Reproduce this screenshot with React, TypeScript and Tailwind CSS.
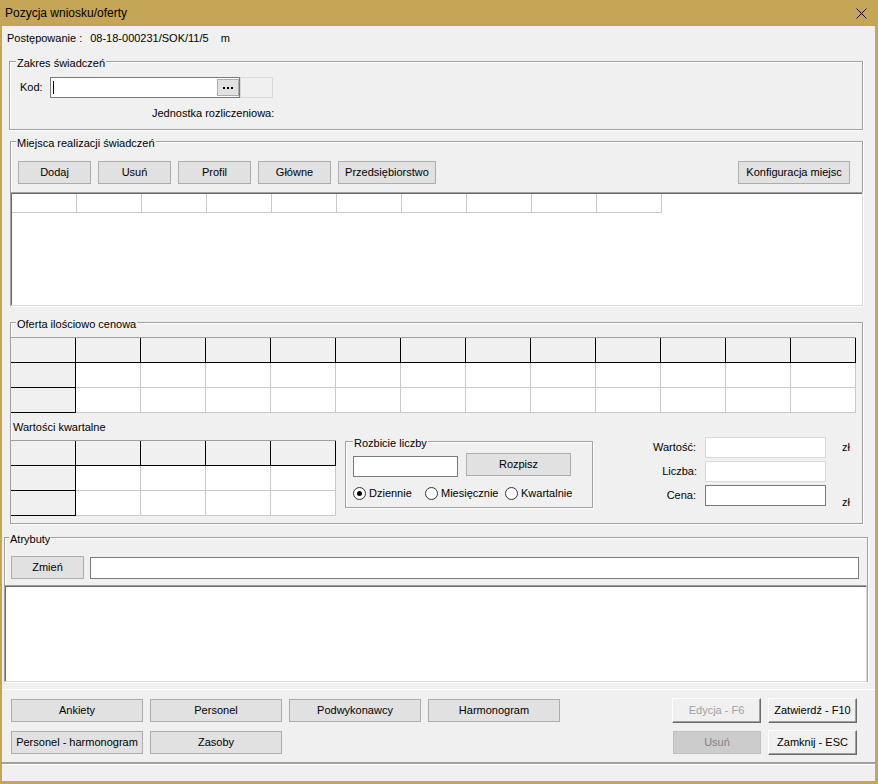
import clsx from "clsx";
import type { ReactNode } from "react";

const font = "font-['Liberation_Sans',Arial,sans-serif]";

function Group({
  label,
  className,
  labelClassName = "left-[6px]",
  children,
}: {
  label: string;
  className?: string;
  labelClassName?: string;
  children?: ReactNode;
}) {
  return (
    <div
      className={clsx(
        "relative border border-[#a0a0a0] shadow-[inset_1px_1px_0_#fff,1px_1px_0_#fff]",
        className,
      )}
    >
      <span
        className={clsx(
          "absolute -top-[6px] z-10 bg-[#f0f0f0] px-[1px] leading-[14px]",
          labelClassName,
        )}
      >
        {label}
      </span>
      {children}
    </div>
  );
}

function Btn({ children, className }: { children?: ReactNode; className?: string }) {
  return (
    <button
      type="button"
      className={clsx(
        "flex shrink-0 items-center justify-center border border-[#adadad] bg-[#e1e1e1] leading-none text-black",
        className,
      )}
    >
      {children}
    </button>
  );
}

function Btn3D({
  children,
  className,
  disabled,
}: {
  children?: ReactNode;
  className?: string;
  disabled?: boolean;
}) {
  return (
    <button
      type="button"
      className={clsx(
        "flex shrink-0 items-center justify-center border border-t-white border-r-[#696969] border-b-[#696969] border-l-white bg-[#f0f0f0] leading-none shadow-[inset_-1px_-1px_0_#a0a0a0]",
        disabled ? "text-[#a0a0a0]" : "text-black",
        className,
      )}
    >
      {children}
    </button>
  );
}

function DataGrid({ cols, rows }: { cols: number; rows: number }) {
  return (
    <div className="w-fit border-t border-l border-[#a0a0a0] bg-white">
      {Array.from({ length: rows }).map((_, r) => (
        <div key={r} className="flex">
          {Array.from({ length: cols }).map((_, c) => {
            const fixed = r === 0 || c === 0;
            return (
              <div
                key={c}
                className={clsx(
                  "h-[25px] w-[65px] border-r border-b",
                  fixed ? "border-black bg-[#f0f0f0]" : "border-[#c8c8c8] bg-white",
                )}
              />
            );
          })}
        </div>
      ))}
    </div>
  );
}

function Radio({ checked, label, className }: { checked?: boolean; label: string; className?: string }) {
  return (
    <div className={clsx("flex items-center", className)}>
      <span className="flex h-[13px] w-[13px] items-center justify-center rounded-full border border-[#333333] bg-white">
        {checked && <span className="h-[5px] w-[5px] rounded-full bg-black" />}
      </span>
      <span className="ml-[3px]">{label}</span>
    </div>
  );
}

const sunken =
  "border border-t-[#a0a0a0] border-r-[#d8d8d8] border-b-[#d8d8d8] border-l-[#a0a0a0] bg-white shadow-[inset_1px_1px_0_#696969]";

export default function App() {
  return (
    <div className={clsx("flex h-[784px] w-[878px] flex-col bg-[#c4a656] text-[11px] text-black", font)}>
      {/* Title bar */}
      <div className="flex h-[26px] shrink-0 items-center justify-between pl-[5px]">
        <span className="text-[12px]">Pozycja wniosku/oferty</span>
        <svg width="11" height="11" viewBox="0 0 11 11" className="mr-[11px]">
          <path d="M0.5 0.5 L10.5 10.5 M10.5 0.5 L0.5 10.5" stroke="#000" strokeWidth="1" fill="none" />
        </svg>
      </div>

      <div className="flex flex-1 flex-col pr-[3px] pb-[3px] pl-[2px]">
        <div className="flex flex-1 flex-col bg-[#f0f0f0]">
          {/* Postępowanie */}
          <div className="flex h-[24px] shrink-0 items-center pl-[5px]">
            <span>Postępowanie :</span>
            <span className="ml-[8px]">08-18-000231/SOK/11/5</span>
            <span className="ml-[12px]">m</span>
          </div>

          {/* Zakres świadczeń */}
          <Group label="Zakres świadczeń" className="mt-[11px] ml-[7px] h-[69px] w-[854px] shrink-0">
            <div className="pt-[15px]">
              <div className="flex h-[21px] items-center pl-[10px]">
                <span className="w-[30px]">Kod:</span>
                <div className="flex h-[21px] w-[190px] items-center border border-[#7a7a7a] bg-white">
                  <span className="ml-[2px] h-[13px] w-[1px] bg-black" />
                  <div className="ml-auto flex h-[17px] w-[22px] items-center justify-center gap-[2px] border border-[#adadad] bg-[#e1e1e1]">
                    <span className="h-[2px] w-[2px] bg-black" />
                    <span className="h-[2px] w-[2px] bg-black" />
                    <span className="h-[2px] w-[2px] bg-black" />
                  </div>
                </div>
                <div className="h-[21px] w-[33px] border border-[#dadada] bg-[#f0f0f0]" />
              </div>
              <div className="mt-[8px] pl-[142px] leading-[14px]">Jednostka rozliczeniowa:</div>
            </div>
          </Group>

          {/* Miejsca realizacji świadczeń */}
          <Group label="Miejsca realizacji świadczeń" labelClassName="left-[5px]" className="mt-[11px] ml-[8px] h-[165px] w-[853px] shrink-0">
            <div className="flex pt-[19px] pl-[7px]">
              <div className="flex gap-[7px]">
                <Btn className="h-[23px] w-[73px]">Dodaj</Btn>
                <Btn className="h-[23px] w-[73px]">Usuń</Btn>
                <Btn className="h-[23px] w-[73px]">Profil</Btn>
                <Btn className="h-[23px] w-[73px]">Główne</Btn>
                <Btn className="h-[23px] w-[98px]">Przedsiębiorstwo</Btn>
              </div>
              <Btn className="mr-[12px] ml-auto h-[23px] w-[112px]">Konfiguracja miejsc</Btn>
            </div>
            <div className={clsx("relative -mx-[1px] mt-[8px] h-[114px] pt-[1px] pl-[1px]", sunken)}>
              <div className="flex">
                {Array.from({ length: 10 }).map((_, i) => (
                  <div key={i} className="h-[19px] w-[65px] border-r border-b border-[#c8c8c8] bg-white" />
                ))}
              </div>
            </div>
          </Group>

          {/* Oferta ilościowo cenowa */}
          <Group label="Oferta ilościowo cenowa" labelClassName="left-[5px]" className="mt-[16px] ml-[8px] h-[202px] w-[853px] shrink-0">
            <div className="pt-[14px]">
              <div className="-ml-[1px]">
                <DataGrid cols={13} rows={3} />
              </div>
              <div className="mt-[7px] pl-[2px] leading-[14px]">Wartości kwartalne</div>
              <div className="flex items-start">
                <div className="-ml-[1px] mt-[6px]">
                  <DataGrid cols={5} rows={3} />
                </div>

                <Group label="Rozbicie liczby" labelClassName="left-[7px]" className="mt-[7px] ml-[9px] h-[67px] w-[248px] shrink-0">
                  <div className="flex items-start pt-[14px] pl-[7px]">
                    <div className="h-[21px] w-[105px] border border-[#7a7a7a] bg-white" />
                    <Btn className="-mt-[3px] ml-[8px] h-[23px] w-[105px]">Rozpisz</Btn>
                  </div>
                  <div className="mt-[8px] flex h-[16px] items-center pl-[7px]">
                    <Radio checked label="Dziennie" className="w-[72px]" />
                    <Radio label="Miesięcznie" className="w-[80px]" />
                    <Radio label="Kwartalnie" />
                  </div>
                </Group>

                <div className="mt-[3px] ml-[43px] flex flex-col gap-[3px]">
                  <div className="flex h-[21px] items-center">
                    <span className="w-[60px] text-right">Wartość:</span>
                    <div className="ml-[9px] h-[21px] w-[121px] border border-[#d9d9d9] bg-white" />
                    <span className="ml-[16px]">zł</span>
                  </div>
                  <div className="flex h-[21px] items-center">
                    <span className="w-[61px] text-right">Liczba:</span>
                    <div className="ml-[8px] h-[21px] w-[121px] border border-[#d9d9d9] bg-white" />
                  </div>
                  <div className="flex h-[21px] items-center">
                    <span className="w-[60px] text-right">Cena:</span>
                    <div className="ml-[9px] h-[21px] w-[121px] border border-[#7a7a7a] bg-white" />
                    <span className="mt-[14px] ml-[16px]">zł</span>
                  </div>
                </div>
              </div>
            </div>
          </Group>

          {/* Atrybuty */}
          <Group label="Atrybuty" labelClassName="left-[4px]" className="mt-[13px] ml-[2px] h-[145px] w-[864px] shrink-0">
            <div className="flex pt-[18px] pl-[6px]">
              <Btn className="h-[23px] w-[73px]">Zmień</Btn>
              <div className="mt-[1px] ml-[6px] h-[22px] w-[769px] border border-[#7a7a7a] bg-white" />
            </div>
            <div className={clsx("-ml-[1px] mt-[6px] h-[97px] w-[863px]", sunken)} />
          </Group>

          {/* Bottom panel */}
          <div className="mt-[7px] flex h-[75px] shrink-0 border-t border-b-2 border-t-white border-b-[#a0a0a0] pt-[9px] pl-[9px]">
            <div className="flex flex-col gap-[9px]">
              <div className="flex gap-[7px]">
                <Btn className="h-[23px] w-[132px]">Ankiety</Btn>
                <Btn className="h-[23px] w-[132px]">Personel</Btn>
                <Btn className="h-[23px] w-[132px]">Podwykonawcy</Btn>
                <Btn className="h-[23px] w-[132px]">Harmonogram</Btn>
              </div>
              <div className="flex gap-[7px]">
                <Btn className="h-[23px] w-[132px]">Personel - harmonogram</Btn>
                <Btn className="h-[23px] w-[132px]">Zasoby</Btn>
              </div>
            </div>
            <div className="-mt-[1px] mr-[18px] ml-auto flex flex-col gap-[7px]">
              <div className="flex gap-[7px]">
                <Btn3D disabled className="h-[25px] w-[89px]">Edycja - F6</Btn3D>
                <Btn3D className="h-[25px] w-[89px]">Zatwierdź - F10</Btn3D>
              </div>
              <div className="flex items-start gap-[7px]">
                <button
                  type="button"
                  className="mt-[1px] ml-[1px] flex h-[23px] w-[88px] items-center justify-center border border-[#bfbfbf] bg-[#cccccc] leading-none text-[#838383]"
                >
                  Usuń
                </button>
                <Btn3D className="h-[25px] w-[89px]">Zamknij - ESC</Btn3D>
              </div>
            </div>
          </div>

          {/* Status bar */}
          <div className="h-[17px] shrink-0 border-t border-white bg-[#f0f0f0]" />
        </div>
      </div>
    </div>
  );
}
